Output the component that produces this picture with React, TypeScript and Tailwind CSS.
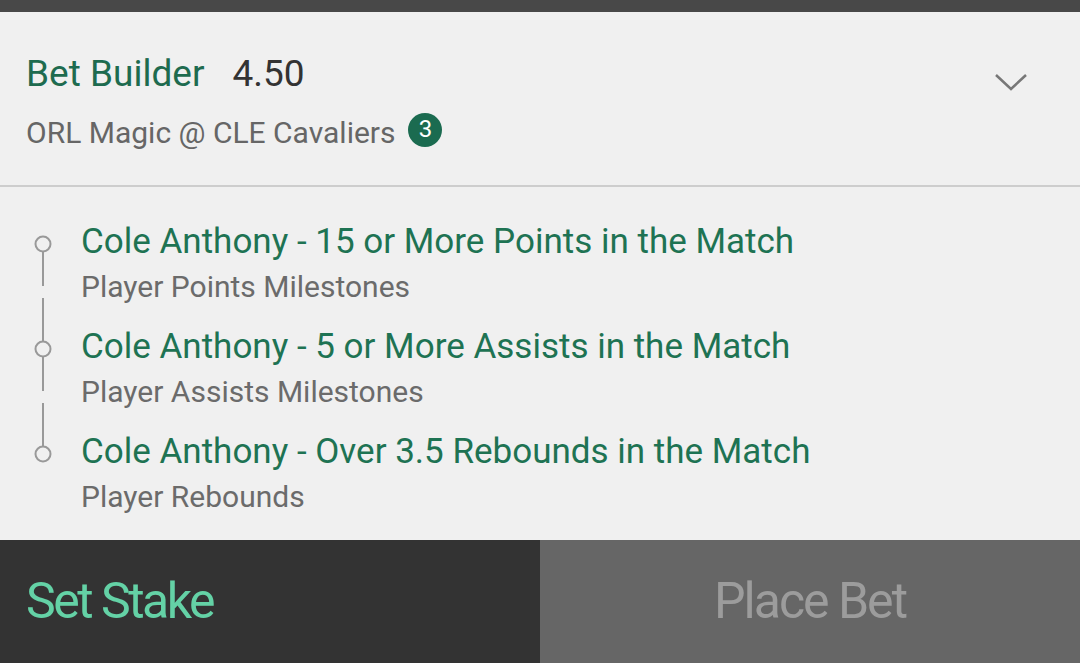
import React from "react";

const legs = [
  { title: "Cole Anthony - 15 or More Points in the Match", sub: "Player Points Milestones" },
  { title: "Cole Anthony - 5 or More Assists in the Match", sub: "Player Assists Milestones" },
  { title: "Cole Anthony - Over 3.5 Rebounds in the Match", sub: "Player Rebounds" },
];

export default function App() {
  return (
    <div className="w-[1080px] h-[663px] flex flex-col bg-[#f0f0f0] overflow-hidden" style={{ fontFamily: "Roboto, 'Noto Sans', sans-serif" }}>
      <div className="h-[12px] shrink-0 bg-[#484848]" />
      <div className="h-[175px] shrink-0 flex items-start justify-between border-b-2 border-[#cdcdcd] pl-[26px] pr-[52px]">
        <div className="flex flex-col pt-[39px]">
          <div className="flex items-baseline gap-[28px] leading-[46px]">
            <span className="text-[37px] text-[#1e6b4f]">Bet Builder</span>
            <span className="text-[37px] text-[#333333]">4.50</span>
          </div>
          <div className="flex items-center gap-[13px] mt-[16px]">
            <span className="text-[30px] text-[#666666] leading-[40px]">ORL Magic @ CLE Cavaliers</span>
            <span className="w-[34px] h-[34px] rounded-full bg-[#1b6b50] text-white text-[24px] flex items-center justify-center leading-none pb-[2px] -mt-[6px]">3</span>
          </div>
        </div>
        <svg className="mt-[60px]" width="34" height="20" viewBox="0 0 34 20">
          <path d="M2 3 L17 17 L32 3" fill="none" stroke="#777777" strokeWidth="2.5" />
        </svg>
      </div>
      <div className="flex-1 min-h-0 overflow-hidden flex flex-col pt-[46px]">
        {legs.map((l, i) => (
          <div key={i} className="flex h-[105px] shrink-0">
            <div className="w-[81px] relative shrink-0">
              <svg className="absolute left-0 top-0 overflow-visible" width="81" height="105" viewBox="0 0 81 105">
                <circle cx="43" cy="11" r="7.5" fill="none" stroke="#999999" strokeWidth="2" />
                {i < 2 && <line x1="43" y1="18.5" x2="43" y2="53" stroke="#999999" strokeWidth="2" />}
                {i < 2 && <line x1="43" y1="65" x2="43" y2="109" stroke="#999999" strokeWidth="2" />}
              </svg>
            </div>
            <div className="flex flex-col -mt-[12px]">
              <span className="text-[35px] leading-[42px] text-[#1e7353]">{l.title}</span>
              <span className="text-[30px] leading-[36px] text-[#6b6b6b] mt-[6px]">{l.sub}</span>
            </div>
          </div>
        ))}
      </div>
      <div className="h-[123px] shrink-0 flex">
        <div className="w-[540px] bg-[#333333] flex items-center pl-[26px]">
          <span className="text-[50px] text-[#64d2a6] tracking-[-2.5px]">Set Stake</span>
        </div>
        <div className="w-[540px] bg-[#666666] flex items-center justify-center">
          <span className="text-[50px] text-[#9c9c9c] tracking-[-2px]">Place Bet</span>
        </div>
      </div>
    </div>
  );
}
